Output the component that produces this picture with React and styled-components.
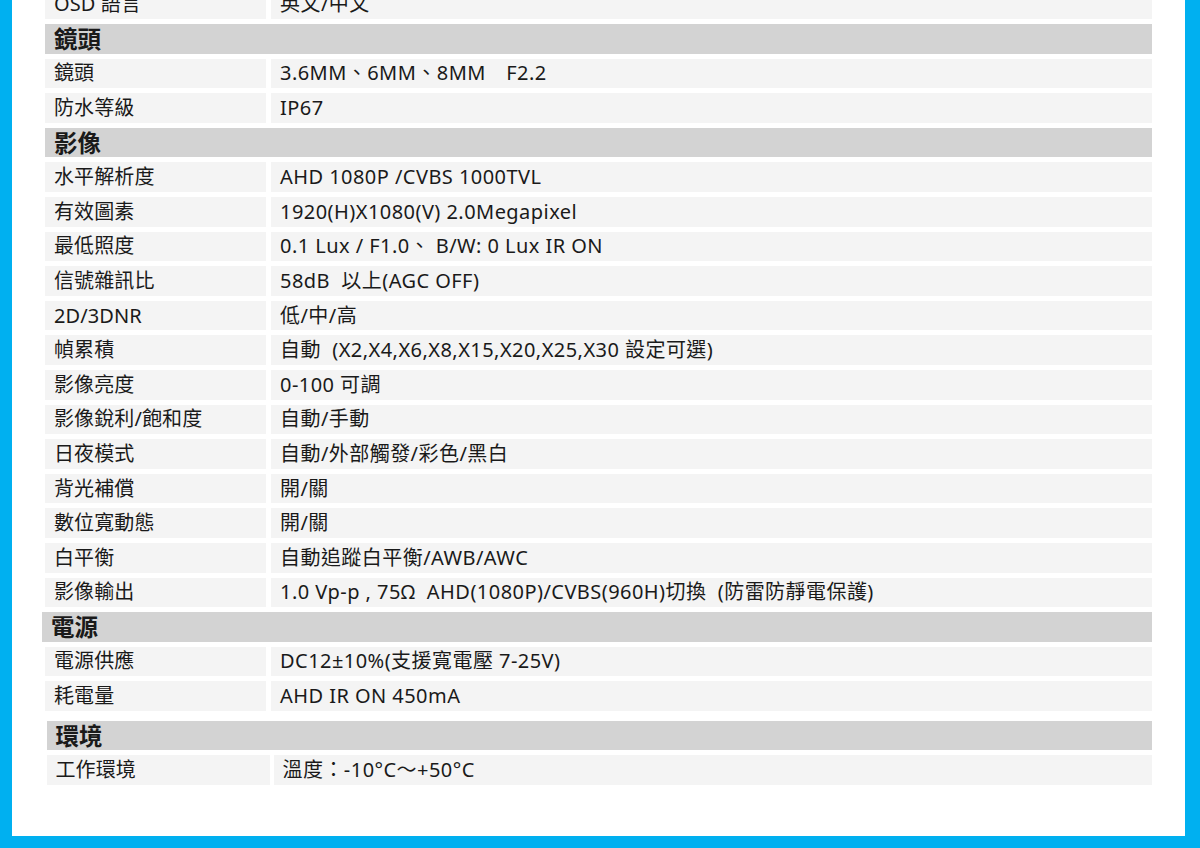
import React from 'react';
import styled, { createGlobalStyle } from 'styled-components';

const BLUE = '#00b0f0';
const ROWBG = '#f4f4f4';
const HEADBG = '#d3d3d3';
const TEXT = '#1a1a1a';

const GlobalStyle = createGlobalStyle`
  html, body {
    margin: 0;
    padding: 0;
    background: #fff;
  }
  body {
    font-family: "Noto Sans", "Noto Sans CJK TC", sans-serif;
    color: ${TEXT};
  }
`;

const Frame = styled.div`
  box-sizing: border-box;
  height: 848px;
  overflow: hidden;
  background: #fff;
  border-left: 12px solid ${BLUE};
  border-right: 15px solid ${BLUE};
  border-bottom: 12px solid ${BLUE};
  padding: 0 33px;
`;

const Table = styled.div`
  display: flex;
  flex-direction: column;
  gap: 5px;
  margin-top: -10.6px;
`;

const Section = styled.div`
  display: flex;
  flex-direction: column;
  gap: 5px;
  margin-top: ${p => (p.$offset ? '5px' : '0')};
  margin-left: ${p => (p.$offset ? '1.5px' : '0')};
`;

const Header = styled.div`
  height: 29.6px;
  background: ${HEADBG};
  display: flex;
  align-items: center;
  padding-left: 9px;
  margin-left: ${p => (p.$shift ? '-3px' : '0')};
  font-family: "Noto Sans CJK TC", sans-serif;
  font-size: 23.5px;
  font-weight: 700;
  line-height: 1;
`;

const Row = styled.div`
  display: grid;
  grid-template-columns: ${p => (p.$offset ? '223px' : '221px')} 1fr;
  column-gap: ${p => (p.$offset ? '4px' : '5px')};
  height: 29.6px;
`;

const Cell = styled.div`
  background: ${ROWBG};
  display: flex;
  align-items: center;
  padding-left: 9px;
  white-space: pre;
  font-size: 20px;
  letter-spacing: ${p => (p.$value ? '0.45px' : '0.1px')};
  line-height: 1;
`;

const sections = [
  {
    title: null,
    rows: [['OSD 語言', '英文/中文']],
  },
  {
    title: '鏡頭',
    rows: [
      ['鏡頭', '3.6MM、6MM、8MM　F2.2'],
      ['防水等級', 'IP67'],
    ],
  },
  {
    title: '影像',
    rows: [
      ['水平解析度', 'AHD 1080P /CVBS 1000TVL'],
      ['有效圖素', '1920(H)X1080(V) 2.0Megapixel'],
      ['最低照度', '0.1 Lux / F1.0、 B/W: 0 Lux IR ON'],
      ['信號雜訊比', '58dB  以上(AGC OFF)'],
      ['2D/3DNR', '低/中/高'],
      ['幀累積', '自動  (X2,X4,X6,X8,X15,X20,X25,X30 設定可選)'],
      ['影像亮度', '0-100 可調'],
      ['影像銳利/飽和度', '自動/手動'],
      ['日夜模式', '自動/外部觸發/彩色/黑白'],
      ['背光補償', '開/關'],
      ['數位寬動態', '開/關'],
      ['白平衡', '自動追蹤白平衡/AWB/AWC'],
      ['影像輸出', '1.0 Vp-p , 75Ω  AHD(1080P)/CVBS(960H)切換  (防雷防靜電保護)'],
    ],
  },
  {
    title: '電源',
    shift: true,
    rows: [
      ['電源供應', 'DC12±10%(支援寬電壓 7-25V)'],
      ['耗電量', 'AHD IR ON 450mA'],
    ],
  },
  {
    title: '環境',
    offset: true,
    rows: [['工作環境', '溫度：-10°C～+50°C']],
  },
];

export default function App() {
  return (
    <>
      <GlobalStyle />
      <Frame>
        <Table>
          {sections.map((s, i) => (
            <Section key={i} $offset={s.offset}>
              {s.title && <Header $shift={s.shift}>{s.title}</Header>}
              {s.rows.map(([label, value]) => (
                <Row key={label} $offset={s.offset}>
                  <Cell>{label}</Cell>
                  <Cell $value>{value}</Cell>
                </Row>
              ))}
            </Section>
          ))}
        </Table>
      </Frame>
    </>
  );
}
